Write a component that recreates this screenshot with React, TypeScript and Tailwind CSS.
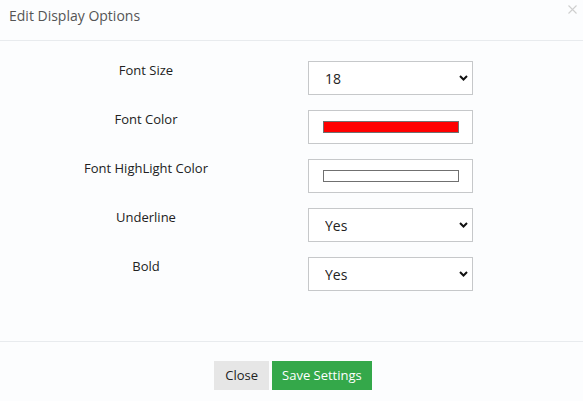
import { useState } from "react";

function Chevron() {
  return (
    <svg
      className="pointer-events-none absolute right-[5px] top-1/2 -translate-y-1/2"
      width="9"
      height="6"
      viewBox="0 0 9 6"
      fill="none"
    >
      <path d="M1 1l3.5 3.5L8 1" stroke="#111" strokeWidth="2" />
    </svg>
  );
}

function SelectBox({ value, options }: { value: string; options: string[] }) {
  const [v, setV] = useState(value);
  return (
    <div className="relative w-[165px] h-[34px]">
      <select
        value={v}
        onChange={(e) => setV(e.target.value)}
        className="appearance-none w-full h-full border border-[#c6c8ca] bg-white pl-[16px] text-[14px] text-[#222] outline-none"
      >
        {options.map((o) => (
          <option key={o}>{o}</option>
        ))}
      </select>
      <Chevron />
    </div>
  );
}

function ColorBox({ color }: { color: string }) {
  return (
    <div className="w-[165px] h-[34px] border border-[#c6c8ca] bg-white flex items-center justify-center">
      <div className="w-[136px] h-[12px] border border-[#707070]" style={{ background: color }} />
    </div>
  );
}

function Row({ label, children }: { label: string; children: React.ReactNode }) {
  return (
    <div className="flex">
      <div className="w-[292px] text-center text-[13px] text-[#222]">{label}</div>
      <div className="pl-[16px]">{children}</div>
    </div>
  );
}

export default function App() {
  return (
    <div
      className="w-[583px] h-[401px] bg-[#fcfdfe] flex flex-col"
      style={{ fontFamily: '"Open Sans", sans-serif' }}
    >
      <div className="relative h-[41px] border-b border-[#e8ebee] px-[9px] pt-[3px]">
        <span className="text-[14px] text-[#555]">Edit Display Options</span>
        <button className="absolute right-[6px] top-[5px]" aria-label="Close">
          <svg width="9" height="9" viewBox="0 0 9 9" fill="none">
            <path d="M0.5 0.5l8 8M8.5 0.5l-8 8" stroke="#cfcfcf" strokeWidth="1.1" />
          </svg>
        </button>
      </div>
      <div className="flex flex-col gap-[15px] pt-[20px] h-[300px]">
        <Row label="Font Size">
          <SelectBox value="18" options={["12", "14", "16", "18", "20", "24"]} />
        </Row>
        <Row label="Font Color">
          <ColorBox color="#ff0000" />
        </Row>
        <Row label="Font HighLight Color">
          <ColorBox color="#ffffff" />
        </Row>
        <Row label="Underline">
          <SelectBox value="Yes" options={["Yes", "No"]} />
        </Row>
        <Row label="Bold">
          <SelectBox value="Yes" options={["Yes", "No"]} />
        </Row>
      </div>
      <div className="border-t border-[#e8ebee] flex justify-center gap-[3px] pt-[19px] pl-[3px]">
        <button className="h-[29px] px-[11px] bg-[#e6e6e6] text-[13px] text-[#222]">Close</button>
        <button className="h-[29px] px-[10px] bg-[#34a84a] text-[13px] text-white">Save Settings</button>
      </div>
    </div>
  );
}
